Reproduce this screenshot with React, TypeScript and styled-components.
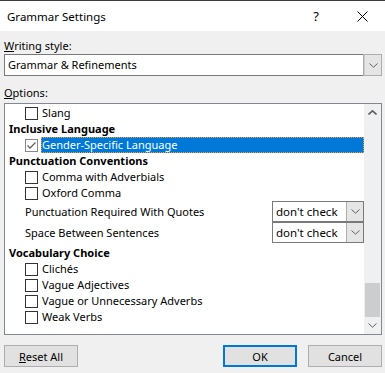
import React from "react";
import styled, { createGlobalStyle } from "styled-components";

const GlobalStyle = createGlobalStyle`
  html, body { margin: 0; padding: 0; background: #f0f0f0; }
  body { font-family: "Noto Sans", "Liberation Sans", sans-serif; font-size: 11px; color: #000; }
`;

type Item =
  | { kind: "header"; label: string }
  | { kind: "check"; label: string; checked?: boolean; selected?: boolean }
  | { kind: "select"; label: string; value: string; tall?: boolean };

const items: Item[] = [
  { kind: "check", label: "Slang" },
  { kind: "header", label: "Inclusive Language" },
  { kind: "check", label: "Gender-Specific Language", checked: true, selected: true },
  { kind: "header", label: "Punctuation Conventions" },
  { kind: "check", label: "Comma with Adverbials" },
  { kind: "check", label: "Oxford Comma" },
  { kind: "select", label: "Punctuation Required With Quotes", value: "don't check" },
  { kind: "select", label: "Space Between Sentences", value: "don't check", tall: true },
  { kind: "header", label: "Vocabulary Choice" },
  { kind: "check", label: "Clichés" },
  { kind: "check", label: "Vague Adjectives" },
  { kind: "check", label: "Vague or Unnecessary Adverbs" },
  { kind: "check", label: "Weak Verbs" },
];

const Chevron = ({ up }: { up?: boolean }) => (
  <svg width="9" height="5" viewBox="0 0 9 5">
    <path
      d={up ? "M0.5 4.5 L4.5 0.8 L8.5 4.5" : "M0.5 0.5 L4.5 4.2 L8.5 0.5"}
      fill="none"
      stroke="#606060"
      strokeWidth={up ? 1.6 : 1}
    />
  </svg>
);

const App = () => {
  return (
    <Dialog>
      <GlobalStyle />
      <TitleBar>
        <Title>Grammar Settings</Title>
        <Help>?</Help>
        <Close>
          <svg width="11" height="11" viewBox="0 0 11 11">
            <path d="M0.5 0.5 L10.5 10.5 M10.5 0.5 L0.5 10.5" stroke="#000" strokeWidth="1" />
          </svg>
        </Close>
      </TitleBar>

      <Body>
        <FieldLabel>
          <u>W</u>riting style:
        </FieldLabel>
        <Combo>
          <ComboText>Grammar &amp; Refinements</ComboText>
          <ComboButton>
            <Chevron />
          </ComboButton>
        </Combo>

        <FieldLabel $gap>
          <u>O</u>ptions:
        </FieldLabel>
        <ListBox>
          <ListContent>
            {items.map((it, i) => {
              if (it.kind === "header") return <HeaderRow key={i}>{it.label}</HeaderRow>;
              if (it.kind === "select")
                return (
                  <SelectRow key={i} $tall={it.tall}>
                    <span>{it.label}</span>
                    <SmallCombo>
                      <SmallComboText>{it.value}</SmallComboText>
                      <SmallComboButton>
                        <Chevron />
                      </SmallComboButton>
                    </SmallCombo>
                  </SelectRow>
                );
              return (
                <CheckRow key={i}>
                  <Box $checked={it.checked}>
                    {it.checked && (
                      <svg width="11" height="11" viewBox="0 0 11 11">
                        <path d="M1.5 5.5 L4 8 L9.5 2.5" fill="none" stroke="#606060" strokeWidth="1.3" />
                      </svg>
                    )}
                  </Box>
                  <CheckLabel $selected={it.selected}>{it.label}</CheckLabel>
                </CheckRow>
              );
            })}
          </ListContent>
          <ScrollBar>
            <ScrollArrow>
              <Chevron up />
            </ScrollArrow>
            <ScrollTrack>
              <Thumb />
            </ScrollTrack>
            <ScrollArrow>
              <Chevron />
            </ScrollArrow>
          </ScrollBar>
        </ListBox>

        <Footer>
          <Button>
            <u>R</u>eset All
          </Button>
          <Spacer />
          <Button $primary>OK</Button>
          <Button>Cancel</Button>
        </Footer>
      </Body>
    </Dialog>
  );
};

const Dialog = styled.div`
  width: 385px;
  height: 373px;
  background: #f0f0f0;
  border-top: 1px solid #3c3c3c;
  box-sizing: border-box;
  overflow: hidden;
`;

const TitleBar = styled.div`
  height: 30px;
  background: #fff;
  display: flex;
  align-items: center;
  padding-left: 7px;
`;

const Title = styled.div`
  flex: 1;
  font-size: 11.5px;
`;

const Help = styled.div`
  width: 46px;
  text-align: center;
  font-size: 13px;
`;

const Close = styled.div`
  width: 46px;
  display: flex;
  justify-content: center;
  align-items: center;
`;

const Body = styled.div`
  padding: 7px 3px 0 4px;
`;

const FieldLabel = styled.div<{ $gap?: boolean }>`
  height: 15px;
  line-height: 15px;
  margin-top: ${(p) => (p.$gap ? "9px" : "0")};
  margin-bottom: ${(p) => (p.$gap ? "3px" : "1px")};
`;

const Combo = styled.div`
  height: 22px;
  box-sizing: border-box;
  border: 1px solid #7a7a7a;
  background: #fff;
  display: flex;
  align-items: stretch;
`;

const ComboText = styled.div`
  flex: 1;
  padding-left: 3px;
  line-height: 20px;
`;

const ComboButton = styled.div`
  width: 16px;
  background: #e5e5e5;
  border-left: 1px solid #cccccc;
  display: flex;
  align-items: center;
  justify-content: center;
  outline: 1px solid #adadad;
`;

const ListBox = styled.div`
  height: 232px;
  box-sizing: border-box;
  border: 1px solid #828790;
  background: #fff;
  display: flex;
`;

const ListContent = styled.div`
  flex: 1;
  padding-top: 1px;
`;

const CheckRow = styled.div`
  height: 16px;
  display: flex;
  align-items: center;
  padding-left: 20px;
`;

const Box = styled.div<{ $checked?: boolean }>`
  width: 13px;
  height: 13px;
  box-sizing: border-box;
  border: 1px solid ${(p) => (p.$checked ? "#8a8a8a" : "#333")};
  background: #fff;
  display: flex;
  align-items: center;
  justify-content: center;
  margin-right: 3px;
`;

const CheckLabel = styled.div<{ $selected?: boolean }>`
  height: 16px;
  line-height: 16px;
  padding-left: 1px;
  box-sizing: border-box;
  ${(p) =>
    p.$selected &&
    `
    flex: 1;
    background: #0078d7;
    color: #fff;
    outline: 1px dotted #f0a030;
    outline-offset: -1px;
  `}
`;

const HeaderRow = styled.div`
  height: 16px;
  line-height: 16px;
  padding-left: 4px;
  font-weight: bold;
`;

const SelectRow = styled.div<{ $tall?: boolean }>`
  height: ${(p) => (p.$tall ? "23px" : "21px")};
  display: flex;
  align-items: ${(p) => (p.$tall ? "flex-start" : "center")};
  justify-content: space-between;
  padding-left: 20px;
  padding-right: 0;
  & > span {
    line-height: 21px;
  }
`;

const SmallCombo = styled.div`
  width: 92px;
  height: 21px;
  box-sizing: border-box;
  border: 1px solid #7a7a7a;
  display: flex;
`;

const SmallComboText = styled.div`
  flex: 1;
  padding-left: 3px;
  line-height: 19px;
  font-size: 11.5px;
`;

const SmallComboButton = styled.div`
  width: 16px;
  background: #e5e5e5;
  border-left: 1px solid #adadad;
  display: flex;
  align-items: center;
  justify-content: center;
`;

const ScrollBar = styled.div`
  width: 17px;
  background: #f0f0f0;
  display: flex;
  flex-direction: column;
`;

const ScrollArrow = styled.div`
  height: 17px;
  display: flex;
  align-items: center;
  justify-content: center;
`;

const ScrollTrack = styled.div`
  flex: 1;
  display: flex;
  flex-direction: column;
  justify-content: flex-end;
`;

const Thumb = styled.div`
  height: 34px;
  margin: 0 1px;
  background: #cdcdcd;
`;

const Footer = styled.div`
  display: flex;
  gap: 11px;
  margin-top: 10px;
`;

const Spacer = styled.div`
  flex: 1;
`;

const Button = styled.div<{ $primary?: boolean }>`
  width: 74px;
  height: 22px;
  box-sizing: border-box;
  background: #e1e1e1;
  border: ${(p) => (p.$primary ? "2px solid #0078d7" : "1px solid #adadad")};
  display: flex;
  align-items: center;
  justify-content: center;
`;

export default App;
